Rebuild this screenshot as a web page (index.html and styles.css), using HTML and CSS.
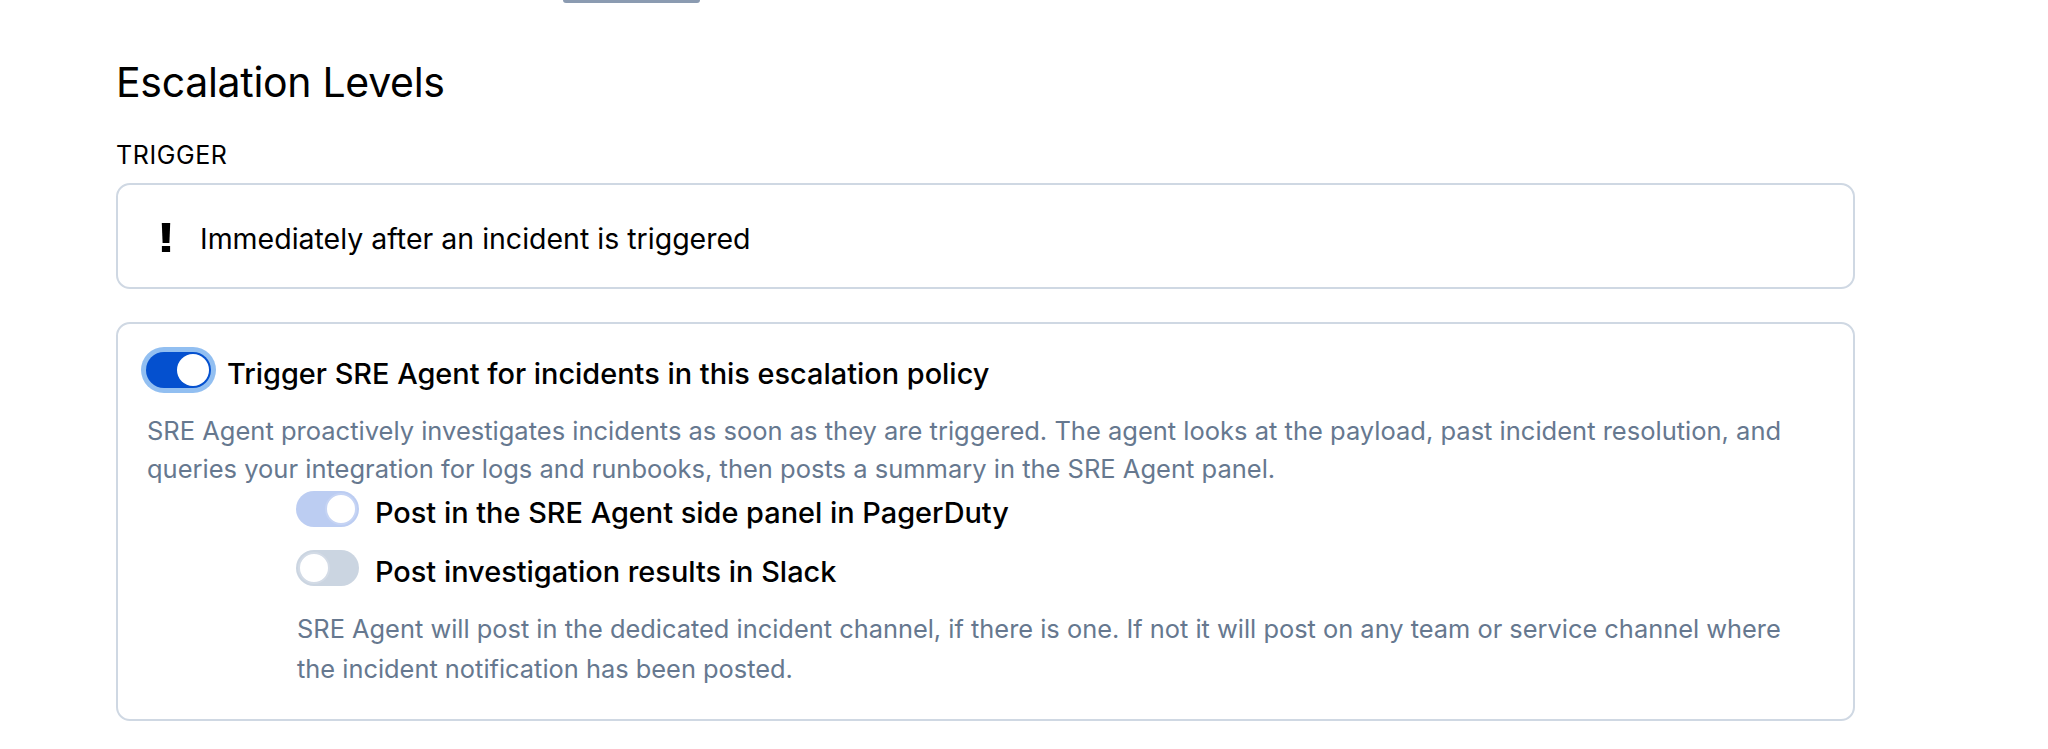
FILE: index.html
```html
<!DOCTYPE html>
<html lang="en">
<head>
<meta charset="utf-8">
<title>Escalation Levels</title>
<link rel="stylesheet" href="styles.css">
</head>
<body>
<div class="topbar"></div>
<main class="page">
  <h1 class="title">Escalation Levels</h1>
  <div class="level-label">TRIGGER</div>
  <div class="card trigger-card">
    <svg class="bang" width="10" height="29" viewBox="0 0 10 29" aria-hidden="true">
      <path d="M0.8 0 H9.2 L8.4 20 H1.6 Z" fill="#000"/>
      <rect x="0.9" y="23" width="8.2" height="6" fill="#000"/>
    </svg>
    <span class="trigger-text">Immediately after an incident is triggered</span>
  </div>
  <div class="card agent-card">
    <div class="toggle-row main-row">
      <span class="switch switch-on focused"><span class="knob"></span></span>
      <span class="row-title">Trigger SRE Agent for incidents in this escalation policy</span>
    </div>
    <p class="desc">SRE Agent proactively investigates incidents as soon as they are triggered. The agent looks at the payload, past incident resolution, and<br>queries your integration for logs and runbooks, then posts a summary in the SRE Agent panel.</p>
    <div class="sub">
      <div class="toggle-row sub-row">
        <span class="switch switch-soft"><span class="knob"></span></span>
        <span class="row-title">Post in the SRE Agent side panel in PagerDuty</span>
      </div>
      <div class="toggle-row sub-row second">
        <span class="switch switch-off"><span class="knob"></span></span>
        <span class="row-title">Post investigation results in Slack</span>
      </div>
      <p class="desc slack-desc">SRE Agent will post in the dedicated incident channel, if there is one. If not it will post on any team or service channel where<br>the incident notification has been posted.</p>
    </div>
  </div>
</main>
</body>
</html>
```

FILE: styles.css
```css
* { box-sizing: border-box; }
html, body {
  margin: 0;
  padding: 0;
  background: #ffffff;
}
body {
  font-family: Inter, "Noto Sans", "Liberation Sans", sans-serif;
  color: #000;
  width: 2048px;
  height: 749px;
  overflow: hidden;
}
.topbar {
  width: 137px;
  height: 3px;
  margin-left: 563px;
  background: #8b9bb1;
  border-radius: 0 0 4px 4px;
}
.page {
  padding-left: 116px;
  width: 1855px;
}
.title {
  margin: 54px 0 0 0;
  font-size: 41px;
  line-height: 50px;
  font-weight: 400;
  letter-spacing: -0.3px;
  color: #000;
}
.level-label {
  margin-top: 32px;
  font-size: 25px;
  line-height: 32px;
  letter-spacing: 0.6px;
  color: #000;
}
.card {
  border: 2px solid #cfd8e3;
  border-radius: 14px;
  background: #fff;
}
.trigger-card {
  margin-top: 12px;
  height: 106px;
  display: flex;
  align-items: center;
  padding-left: 43px;
}
.bang { flex: none; margin-top: 3px; }
.trigger-text {
  margin-left: 29px;
  font-size: 28.5px;
  line-height: 40px;
  margin-top: 6px;
}
.agent-card {
  margin-top: 33px;
  padding: 23px 28px 30px 28px;
}
.toggle-row {
  display: flex;
  align-items: center;
}
.main-row { height: 46px; }
.switch {
  flex: none;
  width: 65px;
  height: 36px;
  border-radius: 18px;
  display: flex;
  align-items: center;
  padding: 0 2px;
}
.switch .knob {
  width: 32px;
  height: 32px;
  border-radius: 50%;
  background: #fff;
}
.switch-on {
  background: #0450cf;
  justify-content: flex-end;
}
.focused {
  box-shadow: 0 0 0 5px #92bff1;
}
.switch-soft {
  width: 63px;
  background: #bccdf2;
  justify-content: flex-end;
}
.switch-soft .knob { border: 2px solid #c6d4f4; }
.switch-off {
  width: 63px;
  background: #cbd5e1;
  justify-content: flex-start;
}
.switch-off .knob { border: 2px solid #d3dbe6; }
.row-title {
  margin-left: 16px;
  font-size: 28.9px;
  line-height: 40px;
  font-weight: 500;
  color: #000;
  margin-top: 8px;
  white-space: nowrap;
}
.desc {
  margin: 19px 0 0 1px;
  font-size: 25.5px;
  line-height: 38px;
  color: #66788f;
}
.sub {
  margin-left: 150px;
}
.sub-row { height: 36px; margin-top: 3px; }
.sub-row.second { margin-top: 23px; }
.slack-desc {
  margin-top: 23px;
  font-size: 25.4px;
  line-height: 40px;
}
```
